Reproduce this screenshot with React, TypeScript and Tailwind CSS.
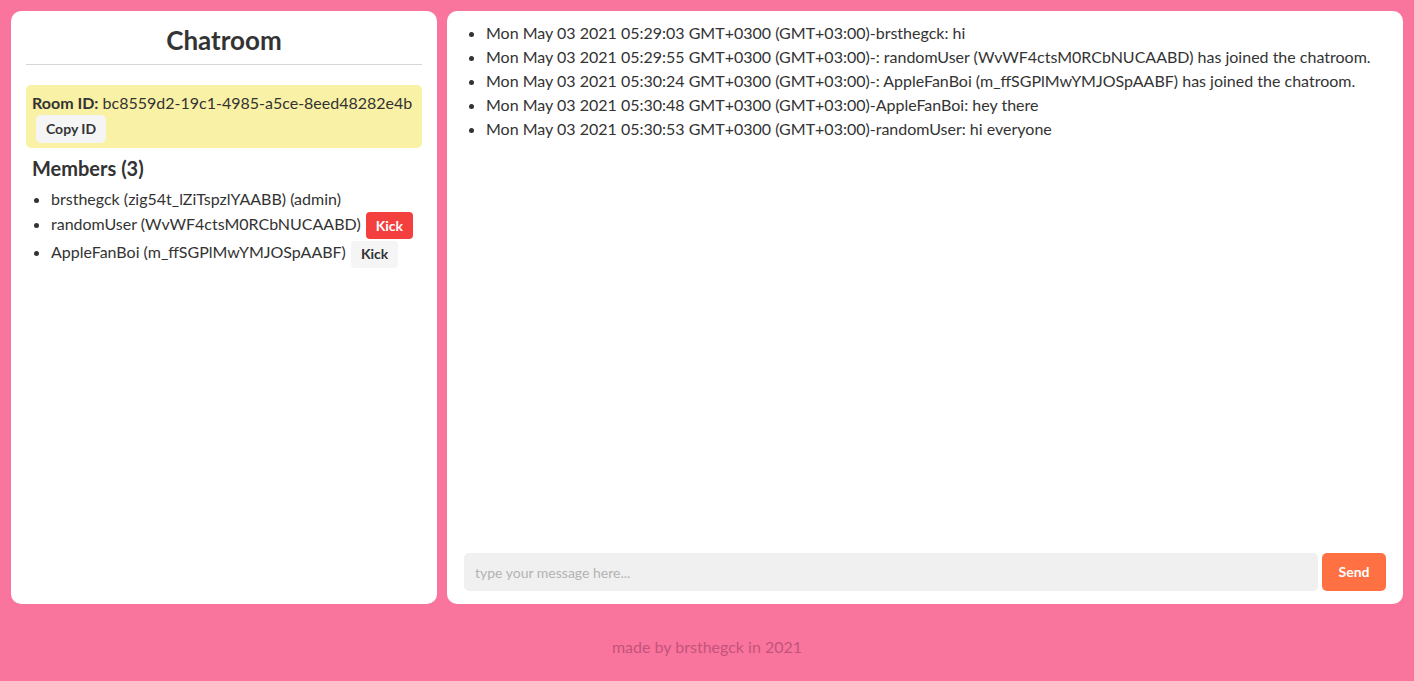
import { useState } from 'react'

interface Member {
  name: string
  id: string
  admin?: boolean
  highlight?: boolean
}

const members: Member[] = [
  { name: 'brsthegck', id: 'zig54t_lZiTspzlYAABB', admin: true },
  { name: 'randomUser', id: 'WvWF4ctsM0RCbNUCAABD', highlight: true },
  { name: 'AppleFanBoi', id: 'm_ffSGPlMwYMJOSpAABF' },
]

const messages = [
  'Mon May 03 2021 05:29:03 GMT+0300 (GMT+03:00)-brsthegck: hi',
  'Mon May 03 2021 05:29:55 GMT+0300 (GMT+03:00)-: randomUser (WvWF4ctsM0RCbNUCAABD) has joined the chatroom.',
  'Mon May 03 2021 05:30:24 GMT+0300 (GMT+03:00)-: AppleFanBoi (m_ffSGPlMwYMJOSpAABF) has joined the chatroom.',
  'Mon May 03 2021 05:30:48 GMT+0300 (GMT+03:00)-AppleFanBoi: hey there',
  'Mon May 03 2021 05:30:53 GMT+0300 (GMT+03:00)-randomUser: hi everyone',
]

export default function App() {
  const [text, setText] = useState('')

  return (
    <div className="min-h-[681px] bg-[#fa759e] p-[11px] text-[#333] font-['Lato',sans-serif] text-base">
      <div className="flex gap-[10px] h-[593px]">
        <div className="w-[426px] shrink-0 bg-white rounded-[10px] px-[15px] pt-[14px]">
          <h1 className="text-center text-[26px] font-bold leading-[30px] pb-[9px] border-b border-[#d6d6d6]">Chatroom</h1>

          <div className="mt-[20px] bg-[#f9f1a5] rounded-[5px] px-[6px] pt-[8px] pb-[5px]">
            <div className="leading-[20px]">
              <span className="font-bold">Room ID:</span> bc8559d2-19c1-4985-a5ce-8eed48282e4b
            </div>
            <button className="ml-[4px] mt-[2px] px-[10px] h-[28px] text-sm font-bold bg-[#f5f5f5] rounded-[5px]">Copy ID</button>
          </div>

          <h2 className="mt-[8px] ml-[6px] text-xl font-bold leading-[24px]">Members (3)</h2>
          <ul className="mt-[7px] list-disc pl-[25px]">
            {members.map(m => (
              <li key={m.id} className="leading-[24px] mb-[1px]">
                {m.name} ({m.id}){m.admin && ' (admin)'}
                {!m.admin && (
                  <button
                    className={`ml-[5px] px-[10px] h-[27px] align-middle text-sm font-bold rounded-[4px] ${
                      m.highlight ? 'bg-[#f43f3f] text-white' : 'bg-[#f5f5f5] text-[#333]'
                    }`}
                  >
                    Kick
                  </button>
                )}
              </li>
            ))}
          </ul>
        </div>

        <div className="flex-1 bg-white rounded-[10px] flex flex-col px-[17px] pt-[10px] pb-[13px]">
          <ul className="flex-1 list-disc pl-[22px]">
            {messages.map((m, i) => (
              <li key={i} className="leading-[24px]">{m}</li>
            ))}
          </ul>
          <div className="flex gap-[4px]">
            <input
              value={text}
              onChange={e => setText(e.target.value)}
              placeholder="type your message here..."
              className="flex-1 h-[38px] bg-[#f0f0f0] rounded-[5px] px-[11px] text-sm placeholder:text-[#b3b3b3] outline-none"
            />
            <button className="w-[64px] h-[38px] bg-[#ff7043] text-white text-sm font-bold rounded-[5px]">Send</button>
          </div>
        </div>
      </div>

      <footer className="text-center mt-[31px] text-[#c4537c]">made by brsthegck in 2021</footer>
    </div>
  )
}
